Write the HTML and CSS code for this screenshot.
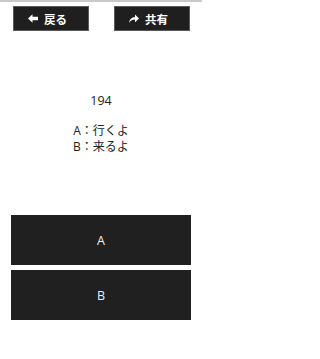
FILE: index.html
```html
<!DOCTYPE html>
<html>
<head>
<meta charset="utf-8">
<meta name="viewport" content="width=device-width, initial-scale=1">
<link rel="stylesheet" href="styles.css">
</head>
<body>
<div class="page">
  <div class="topline"></div>
  <header class="bar">
    <div class="hbtn">
      <svg class="ico" viewBox="0 0 10 9" width="10" height="9"><path d="M0 4.5 L4.5 0.3 L4.5 2.8 L10 2.8 L10 6.2 L4.5 6.2 L4.5 8.7 Z" fill="#fff"/></svg>
      <span>戻る</span>
    </div>
    <div class="hbtn">
      <svg class="ico" viewBox="0 0 10 9" width="10" height="9"><path d="M0 9 C0.5 5 3 3.2 6 3.2 L6 0.5 L10 4.5 L6 8.2 L6 5.6 C3.5 5.6 1.5 6.5 0 9 Z" fill="#fff"/></svg>
      <span>共有</span>
    </div>
  </header>
  <main class="question">
    <p class="num">194</p>
    <p class="line">A：行くよ</p>
    <p class="line">B：来るよ</p>
  </main>
  <section class="answers">
    <div class="abtn">A</div>
    <div class="abtn">B</div>
  </section>
</div>
</body>
</html>
```
FILE: styles.css
```css
html, body {
  margin: 0;
  padding: 0;
  background: #fff;
}
.page {
  width: 202px;
  height: 359px;
  overflow: hidden;
  font-family: "Open Sans", "Noto Sans CJK JP", sans-serif;
  color: #222;
}
.topline {
  height: 2px;
  background: #c9c9c9;
}
.bar {
  display: flex;
  justify-content: space-between;
  padding: 4px 12px 0 13px;
}
.hbtn {
  box-sizing: border-box;
  width: 76px;
  height: 25px;
  padding-right: 7px;
  background: #1f1f1f;
  border: 1px solid #5a5a5a;
  display: flex;
  align-items: center;
  justify-content: center;
  gap: 6px;
  color: #fff;
  font-family: "Noto Sans CJK JP", sans-serif;
  font-size: 11.5px;
  font-weight: bold;
}
.ico {
  display: block;
}
.question {
  margin-top: 62px;
  text-align: center;
  font-size: 12px;
}
.question p {
  margin: 0;
  line-height: 16px;
}
.num {
  font-size: 12.5px;
  margin-bottom: 14px !important;
}
.answers {
  margin-top: 60px;
  padding: 0 11px;
  display: flex;
  flex-direction: column;
  gap: 5px;
}
.abtn {
  height: 50px;
  background: #202020;
  color: #eee;
  font-size: 12.5px;
  display: flex;
  align-items: center;
  justify-content: center;
}
```
